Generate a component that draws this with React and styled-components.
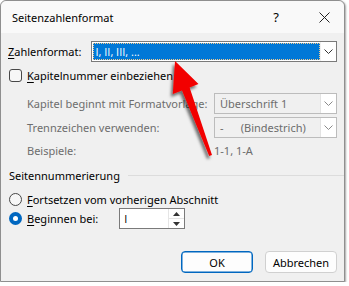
import React from "react";
import styled, { createGlobalStyle } from "styled-components";

const Global = createGlobalStyle`
  html, body { margin: 0; padding: 0; background: #ffffff; }
  body { font-family: "Noto Sans", "Open Sans", sans-serif; font-size: 11px; color: #000; }
  * { box-sizing: border-box; }
`;

const Window = styled.div`
  position: relative;
  width: 345px;
  height: 282px;
  background: #f0f0f0;
  border: 1px solid #8f8f8f;
  border-radius: 6px 6px 0 0;
  box-shadow: 1px 1px 2px rgba(0, 0, 0, 0.35);
  display: flex;
  flex-direction: column;
`;

const TitleBar = styled.div`
  height: 32px;
  flex: none;
  display: flex;
  align-items: center;
  background: #f9f9f9;
  border-radius: 6px 6px 0 0;
  padding-left: 11px;
`;

const Title = styled.div`
  flex: 1;
  font-size: 11px;
`;

const TitleButton = styled.div`
  width: ${(p) => p.$w}px;
  margin-right: ${(p) => p.$mr || 0}px;
  height: 32px;
  display: flex;
  align-items: center;
  justify-content: center;
  font-size: 13px;
`;

const Body = styled.div`
  flex: 1;
  display: flex;
  flex-direction: column;
  padding: 8px 7px 0 7px;
`;

const FormatRow = styled.div`
  display: flex;
  align-items: center;
  gap: 10px;
  height: 21px;
`;

const Label = styled.span`
  color: ${(p) => (p.$disabled ? "#6d6d6d" : "#000")};
  white-space: nowrap;
`;

const U = styled.span`
  text-decoration: underline;
  text-underline-offset: 2px;
`;

const Combo = styled.div`
  flex: ${(p) => (p.$grow ? 1 : "none")};
  height: 21px;
  display: flex;
  align-items: stretch;
  border: 1px solid ${(p) => (p.$disabled ? "#bcbcbc" : "#7a7a7a")};
  background: ${(p) => (p.$disabled ? "#f0f0f0" : "#fff")};
`;

const ComboValue = styled.div`
  flex: 1;
  display: flex;
  align-items: center;
  padding-left: 5px;
  color: ${(p) => (p.$disabled ? "#6d6d6d" : "#000")};
  white-space: pre;
`;

const SelectedText = styled.div`
  flex: 1;
  align-self: stretch;
  margin: 1px 0 1px 1px;
  background: #0078d7;
  color: #fff;
  font-family: "Open Sans", sans-serif;
  outline: 1px dotted #f5c98a;
  outline-offset: -1px;
  display: flex;
  align-items: center;
  padding-left: 2px;
`;

const DropButton = styled.div`
  width: 16px;
  flex: none;
  display: flex;
  align-items: center;
  justify-content: center;
  background: #fff;
  border-left: 1px solid ${(p) => (p.$disabled ? "#e3e3e3" : "#f0f0f0")};
`;

const Chevron = ({ color }) => (
  <svg width="9" height="5" viewBox="0 0 9 5">
    <polyline points="0.5,0.5 4.5,4.5 8.5,0.5" fill="none" stroke={color} strokeWidth="1" />
  </svg>
);

const CheckRow = styled.label`
  display: flex;
  align-items: center;
  gap: 5px;
  margin-top: 6px;
  height: 14px;
  padding-left: 1px;
`;

const CheckBox = styled.span`
  width: 13px;
  height: 13px;
  border: 1px solid #474747;
  border-radius: 3px;
  background: #f7f7f7;
  flex: none;
`;

const DetailGrid = styled.div`
  display: grid;
  grid-template-columns: 187px 123px;
  grid-template-rows: 21px 21px 18px;
  row-gap: 3px;
  margin-top: 11px;
  padding-left: 19px;
  align-items: center;
`;

const PlainValue = styled.span`
  color: #6d6d6d;
`;

const GroupHeader = styled.div`
  display: flex;
  align-items: center;
  gap: 8px;
  margin-top: 8px;
  height: 16px;
  padding-left: 1px;
`;

const GroupLine = styled.div`
  flex: 1;
  height: 1px;
  background: #dcdcdc;
  margin-right: -7px;
`;

const RadioRow = styled.div`
  display: flex;
  align-items: center;
  gap: 5px;
  height: ${(p) => p.$h}px;
  margin-top: ${(p) => p.$mt}px;
  padding-left: 1px;
`;

const Radio = styled.span`
  width: 13px;
  height: 13px;
  border-radius: 50%;
  flex: none;
  display: flex;
  align-items: center;
  justify-content: center;
  border: ${(p) => (p.$checked ? "none" : "1px solid #474747")};
  background: ${(p) => (p.$checked ? "#0067c0" : "#f7f7f7")};
  &::after {
    content: "";
    display: ${(p) => (p.$checked ? "block" : "none")};
    width: 5px;
    height: 5px;
    border-radius: 50%;
    background: #fff;
  }
`;

const SpinBox = styled.div`
  margin-left: 16px;
  width: 66px;
  height: 21px;
  border: 1px solid #7a7a7a;
  background: #fff;
  display: flex;
`;

const SpinValue = styled.div`
  flex: 1;
  display: flex;
  align-items: center;
  padding-left: 4px;
  font-family: "Open Sans", sans-serif;
`;

const SpinButtons = styled.div`
  width: 16px;
  display: flex;
  flex-direction: column;
  border-left: 1px solid #e5e5e5;
`;

const SpinButton = styled.div`
  flex: 1;
  display: flex;
  align-items: center;
  justify-content: center;
  & + & {
    border-top: 1px solid #e5e5e5;
  }
`;

const ButtonRow = styled.div`
  display: flex;
  justify-content: flex-end;
  gap: 12px;
  margin-top: auto;
  margin-bottom: 8px;
`;

const Button = styled.div`
  width: 72px;
  height: 22px;
  display: flex;
  align-items: center;
  justify-content: center;
  background: #fdfdfd;
  border: 1px solid ${(p) => (p.$default ? "#0067c0" : "#d0d0d0")};
  border-radius: 4px;
  box-shadow: ${(p) => (p.$default ? "inset 0 0 0 0.5px #0067c0" : "none")};
`;

const ArrowOverlay = styled.svg`
  position: absolute;
  left: -1px;
  top: -1px;
  pointer-events: none;
`;

export default function App() {
  return (
    <>
      <Global />
      <Window>
        <TitleBar>
          <Title>Seitenzahlenformat</Title>
          <TitleButton $w={20} $mr={18}>?</TitleButton>
          <TitleButton $w={40}>
            <svg width="11" height="11" viewBox="0 0 11 11">
              <path d="M0.5 0.5 L10.5 10.5 M10.5 0.5 L0.5 10.5" stroke="#222" strokeWidth="1" />
            </svg>
          </TitleButton>
        </TitleBar>
        <Body>
          <FormatRow>
            <Label>
              <U>Z</U>ahlenformat:
            </Label>
            <Combo $grow>
              <SelectedText>I, II, III, ...</SelectedText>
              <DropButton>
                <Chevron color="#333" />
              </DropButton>
            </Combo>
          </FormatRow>
          <CheckRow>
            <CheckBox />
            <Label>
              <U>K</U>apitelnummer einbeziehen
            </Label>
          </CheckRow>
          <DetailGrid>
            <Label $disabled>Kapitel beginnt mit Formatvorlage:</Label>
            <Combo $disabled>
              <ComboValue $disabled>Überschrift 1</ComboValue>
              <DropButton $disabled>
                <Chevron color="#8a8a8a" />
              </DropButton>
            </Combo>
            <Label $disabled>Trennzeichen verwenden:</Label>
            <Combo $disabled>
              <ComboValue $disabled>{"-      (Bindestrich)"}</ComboValue>
              <DropButton $disabled>
                <Chevron color="#8a8a8a" />
              </DropButton>
            </Combo>
            <Label $disabled>Beispiele:</Label>
            <PlainValue>1-1, 1-A</PlainValue>
          </DetailGrid>
          <GroupHeader>
            <Label>Seitennummerierung</Label>
            <GroupLine />
          </GroupHeader>
          <RadioRow $h={16} $mt={8}>
            <Radio />
            <Label>
              <U>F</U>ortsetzen vom vorherigen Abschnitt
            </Label>
          </RadioRow>
          <RadioRow $h={21} $mt={1}>
            <Radio $checked />
            <Label>
              <U>B</U>eginnen bei:
            </Label>
            <SpinBox>
              <SpinValue>I</SpinValue>
              <SpinButtons>
                <SpinButton>
                  <svg width="7" height="4" viewBox="0 0 7 4">
                    <polygon points="3.5,0 7,4 0,4" fill="#333" />
                  </svg>
                </SpinButton>
                <SpinButton>
                  <svg width="7" height="4" viewBox="0 0 7 4">
                    <polygon points="0,0 7,0 3.5,4" fill="#333" />
                  </svg>
                </SpinButton>
              </SpinButtons>
            </SpinBox>
          </RadioRow>
          <ButtonRow>
            <Button $default>OK</Button>
            <Button>Abbrechen</Button>
          </ButtonRow>
        </Body>
        <ArrowOverlay width="349" height="286" viewBox="0 0 349 286">
          <defs>
            <filter id="arrowShadow" x="-30%" y="-30%" width="160%" height="160%">
              <feDropShadow dx="-2" dy="3" stdDeviation="1.6" floodColor="#000" floodOpacity="0.55" />
            </filter>
          </defs>
          <polygon
            points="175,61 198.5,84 189.6,87.6 212,155 209.2,156 182,90.4 172.8,94"
            fill="#f20000"
            filter="url(#arrowShadow)"
          />
        </ArrowOverlay>
      </Window>
    </>
  );
}
